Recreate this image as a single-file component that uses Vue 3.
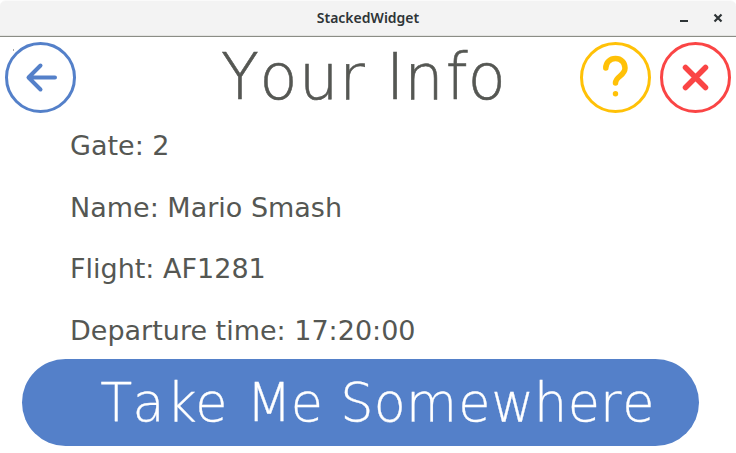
<script setup>
const rows = ['Gate: 2', 'Name: Mario Smash', 'Flight: AF1281', 'Departure time: 17:20:00']
// Glyph origins for the condensed, widely tracked display text
const squeeze = 0.97
const place = (xs) => xs.map((x) => (x / squeeze).toFixed(2)).join(' ')
const headingX = place([1, 39.5, 79, 119.3, 148, 166, 184.3, 225.7, 247.7])
const actionX = place([78.3, 110.5, 144.6, 173.3, 205, 224.4, 268.8, 300, 318.3, 351.8, 384.1, 436.3, 469.3, 512.1, 545.8, 578.1, 600.3])
</script>

<template>
  <div class="window">
    <header class="titlebar">
      <span class="caption">StackedWidget</span>
      <svg class="controls" width="60" height="36" viewBox="0 0 60 36">
        <path d="M4 21h8" stroke="#2e3436" stroke-width="2" />
        <path d="M38.500 14.500l7 7M45.500 14.500l-7 7" stroke="#2e3436" stroke-width="2.200" />
      </svg>
    </header>
    <section class="top">
      <svg class="btn" width="72" height="72" viewBox="0 0 72 72" fill="none" stroke="#5480c9">
        <path d="M9.500 8v2" stroke="#aaa" stroke-width="1" />
        <circle cx="36.500" cy="36.500" r="34" stroke-width="3" />
        <path d="M51 36.500H25M36.500 24.500L24.500 36.500l12 12" stroke-width="4" stroke-linecap="round" stroke-linejoin="round" />
      </svg>
      <h1>
        <svg width="300" height="79"><text transform="scale(.97 1)" :x="headingX" y="62.500">Your Info</text></svg>
      </h1>
      <svg class="btn help" width="72" height="72" viewBox="0 0 72 72" fill="none" stroke="#ffc107">
        <circle cx="36.500" cy="36.500" r="34" stroke-width="3" />
        <path d="M26.800 27C26.800 21.500 31 17.500 36.500 17.500S46 21.500 46 27C46 35 36.500 35 36.500 42" stroke-width="5.500" stroke-linecap="round" />
        <circle cx="36.500" cy="52.700" r="2.700" fill="#ffc107" stroke="none" />
      </svg>
      <svg class="btn" width="72" height="72" viewBox="0 0 72 72" fill="none" stroke="#fa4545">
        <circle cx="36.500" cy="36.500" r="34" stroke-width="3" />
        <path d="M26.500 26.500l20 20M46.500 26.500l-20 20" stroke-width="5.500" stroke-linecap="round" />
      </svg>
    </section>
    <main class="info">
      <p v-for="row in rows" :key="row">{{ row }}</p>
    </main>
    <button class="go">
      <svg width="677" height="87"><text transform="scale(.97 1)" :x="actionX" y="62.500">Take Me Somewhere</text></svg>
    </button>
  </div>
</template>

<style>
body { background: #fff; overflow: hidden; }
</style>
<style scoped>
.window { width: 736px; height: 453px; background: #fff; font-family: "DejaVu Sans", sans-serif; color: #555753; }
.titlebar { height: 37px; box-sizing: border-box; border-top: 1px solid #fafafa; border-bottom: 1px solid #8b8d86; border-radius: 6px 6px 0 0; background: #f3f3f3; box-shadow: inset 0 -1px #e4e4e2; display: grid; grid-template-columns: 60px 1fr 60px; align-items: center; }
.controls { margin-top: -1px; }
.caption { grid-column: 2; text-align: center; font: 600 14px "Noto Sans", sans-serif; color: #2e3436; padding-bottom: 2px; }
.top { height: 79px; display: flex; align-items: flex-start; padding: 4px 4px 0; box-sizing: border-box; }
.btn { flex: none; }
h1 { margin: -4px 0 0 144px; height: 79px; width: 300px; flex: none; }
svg { display: block; }
h1 text { font: 200 64px "DejaVu Sans Light", "DejaVu Sans", sans-serif; fill: #555753; stroke: #555753; stroke-width: .6px; }
.btn.help { margin: 0 8px 0 59px; }
.info { padding-left: 70px; height: 243px; }
p { margin: 0; height: 61.500px; line-height: 59px; font-size: 27px; }
.go { display: block; width: 677px; height: 87px; margin-left: 22px; padding: 0; border: 0; border-radius: 44px; background: #5480c9; }
.go text { font: 200 54px "DejaVu Sans Light", "DejaVu Sans", sans-serif; fill: #fff; stroke: #fff; stroke-width: .3px; }
</style>
